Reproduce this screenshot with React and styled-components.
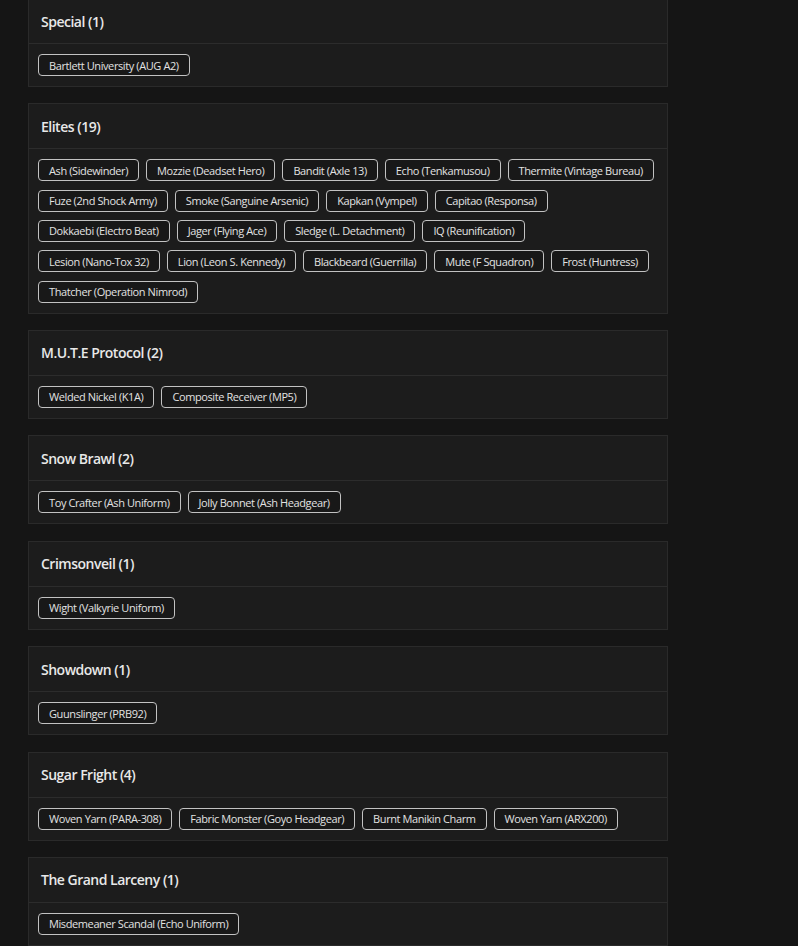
import React from 'react';
import styled, { createGlobalStyle } from 'styled-components';

const GlobalStyle = createGlobalStyle`
  html, body {
    margin: 0;
    padding: 0;
    background: #151515;
  }
  body {
    font-family: 'Open Sans', 'Liberation Sans', sans-serif;
    color: #e6e6e6;
    overflow: hidden;
  }
`;

const Page = styled.div`
  display: flex;
  flex-direction: column;
  gap: 16.4px;
  padding: 0 0 40px 28px;
  margin-top: -2px;
  width: 640px;
`;

const Card = styled.section`
  background: #1c1c1c;
  border: 1px solid #2a2a2a;
`;

const CardHeader = styled.div`
  display: flex;
  align-items: center;
  height: 44px;
  padding: 0 12px;
  border-bottom: 1px solid #2c2c2c;
  font-size: 14px;
  font-weight: 600;
  letter-spacing: -0.5px;
  color: #e8e8e8;
`;

const CardBody = styled.div`
  display: flex;
  flex-wrap: wrap;
  gap: 8.3px 7px;
  padding: 10px 9px;
`;

// $lineEnd keeps the wrap where the source layout breaks the row
const Chip = styled.span`
  display: inline-flex;
  align-items: center;
  height: 22px;
  box-sizing: border-box;
  padding: 0 10px;
  margin-right: ${({ $lineEnd }) => ($lineEnd ? '60px' : '0')};
  border: 1px solid #c2c2c2;
  border-radius: 4px;
  background: #181818;
  font-size: 11px;
  letter-spacing: -0.4px;
  color: #e2e2e2;
  white-space: nowrap;
`;

const sections = [
  { title: 'Special', items: ['Bartlett University (AUG A2)'] },
  {
    title: 'Elites',
    items: [
      'Ash (Sidewinder)', 'Mozzie (Deadset Hero)', 'Bandit (Axle 13)', 'Echo (Tenkamusou)',
      'Thermite (Vintage Bureau)', 'Fuze (2nd Shock Army)', 'Smoke (Sanguine Arsenic)',
      'Kapkan (Vympel)', 'Capitao (Responsa)', 'Dokkaebi (Electro Beat)', 'Jager (Flying Ace)',
      'Sledge (L. Detachment)', 'IQ (Reunification)', 'Lesion (Nano-Tox 32)',
      'Lion (Leon S. Kennedy)', 'Blackbeard (Guerrilla)', 'Mute (F Squadron)',
      'Frost (Huntress)', 'Thatcher (Operation Nimrod)',
    ],
    lineEnds: ['IQ (Reunification)'],
  },
  { title: 'M.U.T.E Protocol', items: ['Welded Nickel (K1A)', 'Composite Receiver (MP5)'] },
  { title: 'Snow Brawl', items: ['Toy Crafter (Ash Uniform)', 'Jolly Bonnet (Ash Headgear)'] },
  { title: 'Crimsonveil', items: ['Wight (Valkyrie Uniform)'] },
  { title: 'Showdown', items: ['Guunslinger (PRB92)'] },
  {
    title: 'Sugar Fright',
    items: ['Woven Yarn (PARA-308)', 'Fabric Monster (Goyo Headgear)', 'Burnt Manikin Charm', 'Woven Yarn (ARX200)'],
  },
  { title: 'The Grand Larceny', items: ['Misdemeaner Scandal (Echo Uniform)'] },
];

export default function App() {
  return (
    <>
      <GlobalStyle />
      <Page>
        {sections.map((s) => (
          <Card key={s.title}>
            <CardHeader>{s.title} ({s.items.length})</CardHeader>
            <CardBody>
              {s.items.map((item) => (
                <Chip key={item} $lineEnd={s.lineEnds?.includes(item)}>{item}</Chip>
              ))}
            </CardBody>
          </Card>
        ))}
      </Page>
    </>
  );
}
